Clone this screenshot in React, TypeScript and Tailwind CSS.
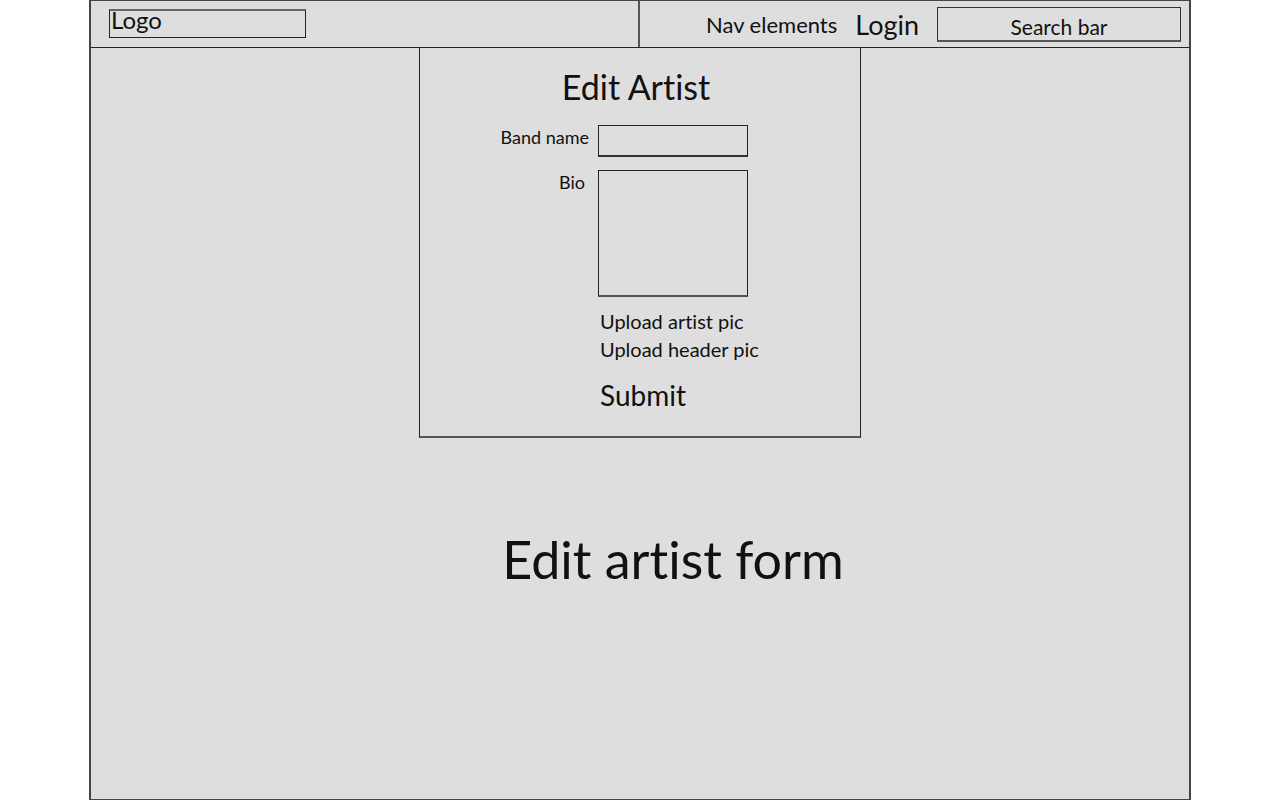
export default function App() {
  return (
    <div className="min-h-screen bg-white flex justify-center font-['Lato',sans-serif] [font-variant-ligatures:none] text-[#111]">
      <div className="w-[1102px] h-[800px] bg-[#dedede] border-x-2 border-y border-[#444] flex flex-col">
        <header className="h-[47px] shrink-0 border-b border-[#222] grid grid-cols-2">
          <div className="border-r-2 border-[#555] pl-[18px] pt-[8px]">
            <div className="w-[197px] h-[29px] border border-[#222] border-t-2 border-t-[#666] text-[24px] leading-none pl-px">
              <div className="-mt-[3px]">Logo</div>
            </div>
          </div>
          <div className="flex items-center justify-end pr-[8px]">
            <span className="text-[22px] leading-none mt-[2px] mr-[18px]">Nav elements</span>
            <span className="text-[27px] leading-none mt-[1px] mr-[18px]">Login</span>
            <div className="w-[244px] h-[35px] mt-[1px] border border-[#333] border-b-2 border-b-[#555] flex items-center justify-center">
              <span className="text-[21px] leading-none mt-[4px]">Search bar</span>
            </div>
          </div>
        </header>

        <div className="flex justify-center">
          <div className="w-[442px] h-[390px] border-x border-b-2 border-[#222] border-b-[#555] flex flex-col">
            <h1 className="text-[34px] leading-none text-center mt-[22px] pr-[8px]">Edit Artist</h1>

            <div className="flex mt-[21px]">
              <div className="w-[178px] pr-[9px] text-right text-[18px] leading-none pt-[3px]">Band name</div>
              <div className="w-[150px] h-[32px] border border-[#222] border-b-2 border-b-[#333]" />
            </div>

            <div className="flex mt-[13px]">
              <div className="w-[178px] pr-[13px] text-right text-[18px] leading-none pt-[3px]">Bio</div>
              <div className="w-[150px] h-[127px] border border-[#222] border-b-2 border-b-[#555]" />
            </div>

            <div className="ml-[180px] mt-[10px] text-[20px] leading-[28px]">
              <div>Upload artist pic</div>
              <div>Upload header pic</div>
            </div>

            <div className="ml-[180px] mt-[18px] text-[28px] leading-none">Submit</div>
          </div>
        </div>

        <div className="flex justify-center pl-[66px] mt-[95px]">
          <span className="text-[52px] leading-none">Edit artist form</span>
        </div>
      </div>
    </div>
  );
}
